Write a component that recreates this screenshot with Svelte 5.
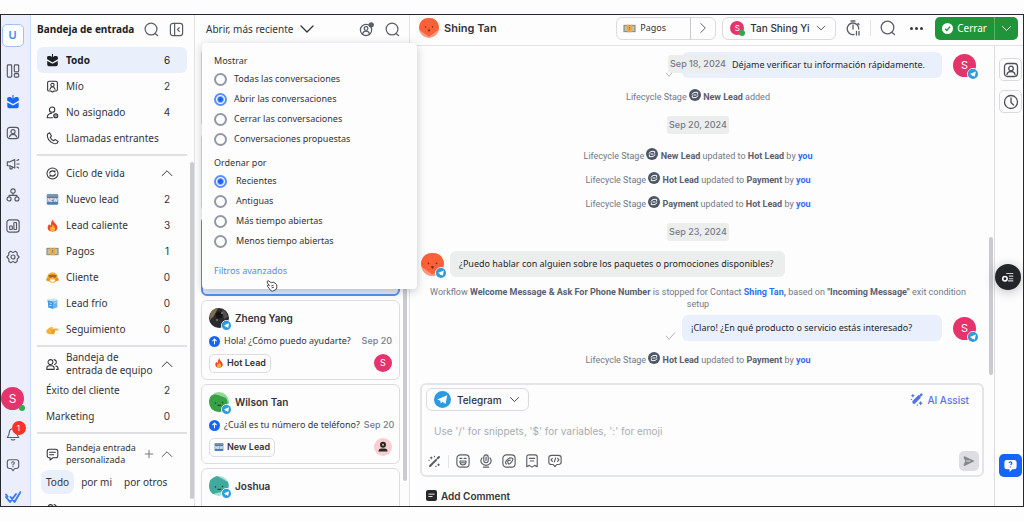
<script>
  let show = $state('open');
  let order = $state('recent');
  let draft = $state('');

  // inner markup of 16x16 line icons, stroked with currentColor
  const icons = {
    search: '<circle cx="7.500" cy="7.500" r="6.300"/><path d="M12 12.500l2.500 2"/>',
    panel: '<rect x="1.500" y="1.500" width="13" height="13" rx="2.500"/><path d="M6 1.500v13M11 6L9 8l2 2"/>',
    board: '<rect x="1.500" y="1" width="5" height="14" rx="1"/><rect x="9.500" y="1" width="5" height="8" rx="1"/><rect x="9.500" y="11" width="5" height="4" rx="1"/>',
    inbox: '<path d="M2 4.500Q2 3 3.500 3H5l3 2 3-2h1.500Q14 3 14 4.500V6l-6 3.500L2 6z" fill="currentColor"/><path d="M1.500 8.500L8 12l6.500-3.500V13q0 2-2 2h-9q-2 0-2-2z" fill="currentColor" stroke="none"/><path d="M8 .5v4"/>',
    contact: '<rect x="1.500" y="1.500" width="13" height="13" rx="3"/><circle cx="8" cy="6.500" r="2.300"/><path d="M4 12.500q.5-3 4-3t4 3"/>',
    mine: '<path d="M2 3.500Q2 1.500 4 1.500h8q2 0 2 2V12q0 1.500-1.500 1.500H10l-2 1.500-2-1.500H3.500Q2 13.500 2 12z"/><circle cx="8" cy="6" r="2"/><path d="M4.800 11.500l1.700-3h3l1.700 3"/>',
    unassigned: '<circle cx="7.500" cy="4.500" r="3.300"/><path d="M1.500 14.500q0-5 5.500-5.500M1.500 14.500H8"/><circle cx="12" cy="12" r="2.500" fill="currentColor" fill-opacity=".5"/>',
    phone: '<path d="M2 2.500L4.500 1l2.200 4-1.500 1.600q1.200 2.800 4.200 4.200l1.600-1.500 4 2.200-1.500 2.500q-1.500 1-4 0Q3.500 11.500 2 6.500q-.8-2.500 0-4z"/>',
    megaphone: '<path d="M1.500 5.500h3L10 3v9.500L4.500 10h-3zM4.500 10v3.500H7V11M12.500 4l2-1M12.500 8h2.500M12.500 11.500l2 1"/>',
    flow: '<circle cx="8" cy="3.500" r="2.500"/><circle cx="3.500" cy="12.500" r="2.300"/><circle cx="12.500" cy="12.500" r="2.300"/><path d="M8 6v2.500M3.500 10V8.500h9V10"/>',
    chart: '<rect x="1" y="1" width="14" height="14" rx="3"/><rect x="4.200" y="8" width="3" height="4" rx=".5"/><rect x="9" y="4" width="3" height="8" rx=".5"/>',
    gear: '<path d="M5.500 1.500L8 3l2.500-1.500 2.200 1.300.1 2.700L15 8l-2.200 2.500-.1 2.700-2.200 1.300L8 13l-2.500 1.500-2.200-1.300-.1-2.700L1 8l2.200-2.500.1-2.700z"/><circle cx="8" cy="8" r="2.300"/>',
    bell: '<path d="M8 2q-4 0-4.300 4.500Q3.500 9.500 1.500 12h13q-2-2.500-2.200-5.500Q12 2 8 2zM6 14.300q2 1.200 4 0"/>',
    help: '<path d="M4 2h8q2.500 0 2.500 2.500v5Q14.500 12 12 12h-2l-2 2.500L6 12H4q-2.500 0-2.500-2.500v-5Q1.500 2 4 2z"/><path d="M6.500 5.700Q6.700 4.300 8 4.300t1.500 1.200Q9.500 6.600 8 7.500M8 9.300v.6"/>',
    cycle: '<circle cx="8" cy="8" r="6.800"/><path d="M4.500 7.500Q5 4.800 8 4.800q1.700 0 3 1.500V4.500M11.500 8.500Q11 11.200 8 11.200q-1.700 0-3-1.500v1.800"/>',
    team: '<circle cx="5.500" cy="5" r="3"/><path d="M1 14v-1.500q0-3 3-3h3q3 0 3 3V14zM10 2q2.800.5 2.800 3T10.500 8M12 9.800q3 .2 3 4.200h-2"/>',
    note: '<path d="M4 1.500h8q2.500 0 2.500 2.500v5.500Q14.500 12 12 12H8.500L5 14.800V12H4q-2.500 0-2.500-2.500V4Q1.500 1.500 4 1.500zM4.500 5.300h7M4.500 8.300h5"/>',
    up: '<path d="M1.500 11.500L8 5l6.500 6.500"/>',
    down: '<path d="M2 5l6 6 6-6"/>',
    right: '<path d="M5 2l6 6-6 6"/>',
    plus: '<path d="M8 2v12M2 8h12"/>',
    assignee: '<circle cx="7.500" cy="8.500" r="6"/><circle cx="7.500" cy="7" r="2"/><path d="M4 12.500q.5-2.700 3.500-2.700t3.500 2.700"/><circle cx="13" cy="3" r="2.200" fill="currentColor"/>',
    timer: '<path d="M9 14.500A5.800 5.800 0 1 1 13.800 9M6 1h4M8 5v4M13 3.500l1 1M11.500 11.500V15M14 11.500V15"/>',
    clock: '<circle cx="8" cy="8" r="6.500"/><path d="M8 4v4.500L10.500 11"/>',
    wand: '<path d="M2.500 13.500L10 6M12 4l1.500-1.500" stroke-width="2.600"/><path d="M4 2.500v2M3 3.500h2M13 11v2M12 12h2M8 1.500v.5M1 6.500h.5M9.500 14h.5"/>',
    emoji: '<rect x="1" y="1" width="14" height="14" rx="4"/><path d="M4.500 5h2.200M9.300 5h2.200M4.500 8h7q0 4.500-3.500 4.500T4.500 8zM6 10h4"/>',
    mic: '<rect x="5.500" y="1" width="5" height="9" rx="2.500"/><path d="M3.500 4.500Q1 8 3 10.500q2 2.500 5 2.500t5-2.500q2-2.500-.5-6M8 3.500v4M5 15h6"/>',
    clip: '<rect x="1" y="1" width="14" height="14" rx="4"/><path d="M5 11.500q-2-1.500.5-4.500t5.500-2.500 0 4.500-4 1.500.5-3 2-.5"/>',
    snippet: '<path d="M2 14.500V3.500q0-2.500 2.500-2.500h7Q14 1 14 3.500v11L11 13l-3 2-3-2zM5 5h6M6 8h4"/>',
    code: '<path d="M4 1.500h8q3 0 3 2.500v5.500q0 2.500-3 2.500h-2l-2 2.500L6 12H4q-3 0-3-2.500V4Q1 1.500 4 1.500zM5 5L3.500 6.800 5 8.500M11 5l1.500 1.800L11 8.500M8.700 4.500l-1.400 4.500"/>',
    check: '<path d="M2 9l4 4.500L14 4"/>',
    ticks: '<path d="M1 8l4 5 6-8M5.500 8L9.500 13 15.500 3M1 5.500l1.500 2" stroke-width="2"/>'
  };

  // small full-colour pictures used as lifecycle marks
  const marks = {
    fresh: '<rect x="1" y="1.500" width="14" height="13" rx="1.500" fill="#4d7fb5"/><path d="M1 3q0-1.500 1.500-1.500h11Q15 1.500 15 3v1.500H1z" fill="#8a939c"/><text x="8" y="11" font-size="5.500" font-weight="700" text-anchor="middle" fill="#fff" font-family="Inter, sans-serif">NEW</text>',
    fire: '<path d="M8.500.5q.5 3 3 5 2.500 2.300 2.500 5Q14 15.500 8 15.500T2 10.500Q2 8 4 6q.5 2 1.700 2Q5.500 3.500 8.500.5z" fill="#ee4a2a"/><path d="M8.500 6.500q.3 2 1.700 3.200Q11.500 11 11.300 12.500 11 15.500 8 15.500T4.800 12.500q0-2 1.500-3.200.5 1 1.200 1Q7.200 8 8.500 6.500z" fill="#ffb52e"/>',
    money: '<rect x=".5" y="3.500" width="15" height="9" fill="#8e9184"/><rect x="2" y="5" width="12" height="6" fill="#c3c2a6"/><circle cx="8" cy="8" r="2.200" fill="#858776"/><path d="M4.500 3.500h2.500l1 9H5.500zM11.500 3.500H9l-1 9h2.500z" fill="#f3a73b"/>',
    client: '<circle cx="8" cy="8" r="6.500" fill="#f7b32f"/><path d="M2.500 5.500Q8 3 13.500 5.500L12 8l-2 .5L8 7l-2 1.500L4 8z" fill="#a8642a"/><path d="M4.500 10.500h7Q11 13.500 8 13.500t-3.500-3z" fill="#fff"/><circle cx="2.500" cy="10.500" r="2.200" fill="#e6912d"/><circle cx="13.500" cy="10.500" r="2.200" fill="#e6912d"/>',
    ice: '<path d="M2 3.500L9 2l5 1.500v9L9 14.500 3 13z" fill="#6bb3ee"/><path d="M2 3.500L8.500 5v9.500L3 13z" fill="#4295e0"/><path d="M2 3.500L9 2l5 1.500L8.500 5zM10 7.500l3-1M4 7l3 1M4 10.500h3" fill="#bfe0fa" stroke="#d9effd"/>',
    hand: '<path d="M.5 9q3-3.500 6.500-4.500l1.500.8-1 1.500H14q1.500 0 1.500 1.200T14 9.200h-3.500q1.200.6.5 1.600.5 1-.5 1.500 0 1.200-1.500 1.400H5Q2 13.500.5 12z" fill="#f6b03c"/><path d="M6.500 9.200H11M7 11h4M6.500 12.700h3.500" stroke="#cf8423" stroke-width=".7"/>'
  };

  const railItems = [
    ['Panel', 'board'],
    ['Bandeja', 'inbox'],
    ['Contactos', 'contact'],
    ['Difusiones', 'megaphone'],
    ['Flujos', 'flow'],
    ['Informes', 'chart'],
    ['Ajustes', 'gear']
  ];

  const inboxes = [
    { label: 'Todo', icon: 'inbox', count: 6, active: true },
    { label: 'Mío', icon: 'mine', count: 2 },
    { label: 'No asignado', icon: 'unassigned', count: 4 },
    { label: 'Llamadas entrantes', icon: 'phone' }
  ];

  const stages = [
    { label: 'Nuevo lead', mark: 'fresh', count: 2 },
    { label: 'Lead caliente', mark: 'fire', count: 3 },
    { label: 'Pagos', mark: 'money', count: 1 },
    { label: 'Cliente', mark: 'client', count: 0 },
    { label: 'Lead frío', mark: 'ice', count: 0 },
    { label: 'Seguimiento', mark: 'hand', count: 0 }
  ];

  const teams = [
    { label: 'Éxito del cliente', count: 2 },
    { label: 'Marketing', count: 0 }
  ];

  const showOptions = [
    ['all', 'Todas las conversaciones'],
    ['open', 'Abrir las conversaciones'],
    ['closed', 'Cerrar las conversaciones'],
    ['snoozed', 'Conversaciones propuestas']
  ];

  const orderOptions = [
    ['recent', 'Recientes'],
    ['oldest', 'Antiguas'],
    ['longest', 'Más tiempo abiertas'],
    ['shortest', 'Menos tiempo abiertas']
  ];

  const conversations = [
    { name: 'Zheng Yang', face: 'photo', text: 'Hola! ¿Cómo puedo ayudarte?', date: 'Sep 20', tag: 'Hot Lead', mark: 'fire', owner: 'S' },
    { name: 'Wilson Tan', face: 'green', text: '¿Cuál es tu número de teléfono?', date: 'Sep 20', tag: 'New Lead', mark: 'fresh' },
    { name: 'Joshua', face: 'teal' }
  ];

  const updates = [
    ['New Lead', 'Hot Lead'],
    ['Hot Lead', 'Payment'],
    ['Payment', 'Hot Lead']
  ];

  const tools = [
    ['Emoji', 'emoji'],
    ['Audio', 'mic'],
    ['Adjuntar', 'clip'],
    ['Fragmentos', 'snippet'],
    ['Variables', 'code']
  ];
</script>

{#snippet icon(name, size = 12)}
  <svg class="icon" width={size} height={size} viewBox="0 0 16 16" fill="none" stroke="currentColor" stroke-width="1.3" stroke-linecap="round" stroke-linejoin="round" aria-hidden="true">{@html icons[name]}</svg>
{/snippet}

{#snippet mark(name, size = 12)}
  <svg class="icon" width={size} height={size} viewBox="0 0 16 16" aria-hidden="true">{@html marks[name]}</svg>
{/snippet}

{#snippet telegram(size)}
  <svg class="icon" width={size} height={size} viewBox="0 0 16 16" aria-hidden="true">
    <circle cx="8" cy="8" r="8" fill="#2c9be0" />
    <path d="M3 8l9.500-4-1.600 8.300-3-2.100-1.500 1.500-.4-2.600z" fill="#fff" />
  </svg>
{/snippet}

{#snippet face(kind, size = 20)}
  <svg class="icon" width={size} height={size} viewBox="0 0 20 20" aria-hidden="true">
    {#if kind === 'photo'}
      <circle cx="10" cy="10" r="10" fill="#2b2a2d" />
      <path d="M2 4Q5 0 9 0L5 8 1 12Q0 8 2 4z" fill="#7d6c52" />
      <path d="M13 2q5 1 6 7l-4 2z" fill="#51504f" />
      <circle cx="10" cy="7" r="3.500" fill="#151517" />
      <path d="M7 12h2M12 5h2" stroke="#b0a284" />
    {:else if kind === 'red'}
      <circle cx="10" cy="10" r="10" fill="#f79a84" />
      <path d="M0 9Q1 0 10 0t10 9q0 3-2 4l-7 5q-1 1-2 0l-7-5Q0 12 0 9z" fill="#fa6138" />
      <path d="M6 8.500l1 1M14 8.500l-1 1" stroke="#7c2e20" stroke-width="1.200" />
      <path d="M8.500 11.500h3L10 14z" fill="#6b2a20" />
    {:else}
      <circle cx="10" cy="10" r="10" fill={kind === 'green' ? '#93d79a' : '#a3dfd6'} />
      <path d={kind === 'green' ? 'M0 9Q1 1 9 3l8 3q3 5 0 10-3 4-7 4Q0 19 0 9z' : 'M0 10Q0 2 8 0l11 6q2 6-2 9l-5 1-8 2Q0 15 0 10z'} fill={kind === 'green' ? '#3aa046' : '#41a99d'} />
      <path d="M6 10.500l1 1M13 10l1 1M8.500 13q2 1 3.500 0" stroke="#174c36" stroke-width="1.200" fill="none" />
    {/if}
  </svg>
{/snippet}

{#snippet row(item)}
  <button class="row" class:active={item.active}>
    {#if item.icon}{@render icon(item.icon, 13)}{/if}
    {#if item.mark}{@render mark(item.mark, 13)}{/if}
    <span class="row-label">{item.label}</span>
    {#if item.count !== undefined}<span class="count">{item.count}</span>{/if}
  </button>
{/snippet}

{#snippet stageDot()}
  <svg class="stage-dot" width="12" height="12" viewBox="0 0 16 16" fill="none" stroke="#fff" stroke-width="1.300" aria-hidden="true">
    <circle cx="8" cy="8" r="8" fill="#4d5666" stroke="none" />
    <path d="M4 7.500Q5 4.500 8 4.500h3.500v3M12 8.500q-1 3-4 3H4.500v-3M6 8h4" />
  </svg>
{/snippet}

{#snippet update(from, to)}
  <p class="system">Lifecycle Stage {@render stageDot()} <b>{from}</b> updated to <b>{to}</b> by <a href="#you">you</a></p>
{/snippet}

{#snippet radios(name, options, selected, pick)}
  {#each options as [value, label]}
    <label class="option">
      <input type="radio" {name} {value} checked={selected === value} onchange={() => pick(value)} />
      {label}
    </label>
  {/each}
{/snippet}

<div class="frame">
  <nav class="rail" aria-label="Principal">
    <a class="workspace" href="#home">U</a>
    {#each railItems as [label, name]}
      <a class="rail-link" class:current={name === 'inbox'} href="#{name}" aria-label={label}>{@render icon(name, 14)}</a>
    {/each}
    <div class="rail-end">
      <button class="badge-host me" aria-label="Perfil">S<i class="online"></i></button>
      <button class="badge-host plain" aria-label="Avisos">{@render icon('bell', 14)}<span class="alert">1</span></button>
      <button class="plain" aria-label="Ayuda">{@render icon('help', 14)}</button>
      <a class="brand" href="#brand" aria-label="Inicio">{@render icon('ticks', 16)}</a>
    </div>
  </nav>

  <aside class="sidebar">
    <header class="side-head">
      <h1>Bandeja de entrada</h1>
      <button class="plain" aria-label="Buscar">{@render icon('search', 15)}</button>
      <button class="plain" aria-label="Contraer">{@render icon('panel', 15)}</button>
    </header>
    {#each inboxes as item}{@render row(item)}{/each}
    <hr />
    <button class="row section">
      {@render icon('cycle', 13)}
      <span class="row-label">Ciclo de vida</span>
      <span class="count">{@render icon('up')}</span>
    </button>
    {#each stages as item}{@render row(item)}{/each}
    <hr />
    <button class="row section">
      {@render icon('team', 13)}
      <span class="row-label">Bandeja de<br />entrada de equipo</span>
      <span class="count">{@render icon('up')}</span>
    </button>
    {#each teams as item}{@render row(item)}{/each}
    <hr />
    <div class="row section custom">
      {@render icon('note', 13)}
      <span class="row-label">Bandeja entrada<br />personalizada</span>
      <button class="plain" aria-label="Añadir">{@render icon('plus', 10)}</button>
      <button class="plain count" aria-label="Plegar">{@render icon('up')}</button>
    </div>
    <div class="tabs">
      <button class="tab chosen">Todo</button>
      <button class="tab">por mi</button>
      <button class="tab">por otros</button>
    </div>
    <div class="row more">{@render icon('team', 13)}</div>
    <i class="scroll side-scroll"></i>
  </aside>

  <section class="list">
    <header class="list-head">
      <button class="plain sort" aria-expanded="true">Abrir, más reciente {@render icon('down', 16)}</button>
      <button class="plain" aria-label="Asignados">{@render icon('assignee', 15)}</button>
      <button class="plain" aria-label="Buscar">{@render icon('search', 15)}</button>
    </header>
    <div class="cards">
      <div class="card"></div>
      <div class="card"></div>
      <div class="card selected"></div>
      {#each conversations as chat}
        <article class="card">
          <div class="who">
            <span class="badge-host">{@render face(chat.face)}<i class="channel">{@render telegram(9)}</i></span>
            <h3>{chat.name}</h3>
          </div>
          {#if chat.text}
            <div class="preview">
              <svg class="icon" width="11" height="11" viewBox="0 0 16 16" fill="none" stroke="#fff" stroke-width="1.500" aria-hidden="true"><circle cx="8" cy="8" r="8" fill="#1665f8" stroke="none" /><path d="M8 12V5M5 7.500L8 4.500l3 3" /></svg>
              <span>{chat.text}</span>
              <time>{chat.date}</time>
            </div>
            <div class="foot">
              <span class="tag">{@render mark(chat.mark, 10)}{chat.tag}</span>
              {#if chat.owner}
                <span class="owner">{chat.owner}</span>
              {:else}
                <span class="owner nobody">
                  <svg class="icon" width="12" height="12" viewBox="0 0 16 16" fill="#26262a" aria-hidden="true"><circle cx="8" cy="5" r="4" /><path d="M2 14q0-4 4-4h4q4 0 4 4z" /><circle cx="8" cy="5" r="1.200" fill="#f8cfcf" /></svg>
                </span>
              {/if}
            </div>
          {/if}
        </article>
      {/each}
    </div>
    <i class="scroll list-scroll"></i>

    <form class="popup">
      <fieldset>
        <legend>Mostrar</legend>
        {@render radios('show', showOptions, show, (v) => (show = v))}
      </fieldset>
      <fieldset class="ordering">
        <legend>Ordenar por</legend>
        {@render radios('order', orderOptions, order, (v) => (order = v))}
      </fieldset>
      <a href="#filters">Filtros avanzados</a>
      <svg class="pointer" width="12" height="12" viewBox="0 0 16 16" fill="#fff" stroke="#333" stroke-width="1.200" stroke-linejoin="round" aria-hidden="true">
        <path d="M2 4q-1.500-3 1-3l4 2.500q3-1.500 5 .5 3 1.500 2.500 5.500l-1 3-5 2.500q-3-.5-4-3.500L2 8.500Q1 6.500 3.500 7l1 .5z" />
        <path d="M7 8l3-1M7.500 10.500l3-1" fill="none" />
      </svg>
    </form>
  </section>

  <main class="chat">
    <header class="chat-head">
      {@render face('red')}
      <h2>Shing Tan</h2>
      <div class="box stage">
        {@render mark('money', 13)}
        <select aria-label="Etapa"><option>Pagos</option></select>
        <button class="plain" aria-label="Siguiente etapa">{@render icon('right')}</button>
      </div>
      <div class="box agent">
        <span class="badge-host small-me">S<i class="online"></i></span>
        <select aria-label="Agente"><option>Tan Shing Yi</option></select>
        {@render icon('down', 10)}
      </div>
      <button class="plain timer" aria-label="Posponer">{@render icon('timer', 16)}</button>
      <button class="plain find" aria-label="Buscar">{@render icon('search', 16)}</button>
      <button class="plain dots" aria-label="Más"><i></i><i></i><i></i></button>
      <div class="close">
        <button>
          <svg class="icon" width="11" height="11" viewBox="0 0 16 16" aria-hidden="true"><circle cx="8" cy="8" r="8" fill="#fff" /><path d="M4.500 8.500l2.500 2.500 4.500-5.500" fill="none" stroke="#1f9438" stroke-width="2" /></svg>
          Cerrar
        </button>
        <button aria-label="Opciones de cierre">{@render icon('down', 11)}</button>
      </div>
    </header>

    <div class="body">
      <div class="thread">
        <div class="messages">
          <div class="msg out">
            <span class="sent">{@render icon('check', 11)}</span>
            <p class="bubble first">Déjame verificar tu información rápidamente.</p>
            <span class="badge-host sender">S<i class="channel">{@render telegram(10)}</i></span>
            <time class="day floating">Sep 18, 2024</time>
          </div>
          <p class="system lead-added">Lifecycle Stage {@render stageDot()} <b>New Lead</b> added</p>
          <time class="day">Sep 20, 2024</time>
          {#each updates as [from, to]}{@render update(from, to)}{/each}
          <time class="day">Sep 23, 2024</time>
          <div class="msg">
            <span class="badge-host">{@render face('red', 23)}<i class="channel">{@render telegram(10)}</i></span>
            <p class="bubble">¿Puedo hablar con alguien sobre los paquetes o promociones disponibles?</p>
          </div>
          <p class="system workflow">
            Workflow <b>Welcome Message &amp; Ask For Phone Number</b> is stopped for Contact <a href="#contact">Shing Tan,</a>
            based on <b>"Incoming Message"</b> exit condition<br />setup
          </p>
          <div class="msg out">
            <span class="sent">{@render icon('check', 11)}</span>
            <p class="bubble">¡Claro! ¿En qué producto o servicio estás interesado?</p>
            <span class="badge-host sender">S<i class="channel">{@render telegram(10)}</i></span>
          </div>
          <div class="last">{@render update('Hot Lead', 'Payment')}</div>
          <i class="scroll thread-scroll"></i>
        </div>

        <form class="composer">
          <div class="bar">
            <div class="box via">
              {@render telegram(17)}
              <select aria-label="Canal"><option>Telegram</option></select>
              {@render icon('down', 11)}
            </div>
            <button type="button" class="plain assist">
              <svg class="icon" width="13" height="13" viewBox="0 0 16 16" fill="none" stroke="currentColor" stroke-linecap="round" aria-hidden="true"><path d="M5 11l6-6" stroke-width="4.500" /><path d="M13.500 2.500l.5-.5" stroke-width="3" /><path d="M3.500 2v2.500M2.300 3.300h2.500M13 11v3M11.500 12.500h3M9 14.500v.5M1.500 8h.5" stroke-width="1.500" /></svg>
              AI Assist
            </button>
          </div>
          <textarea rows="1" aria-label="Mensaje" placeholder="Use '/' for snippets, '$' for variables, ':' for emoji" bind:value={draft}></textarea>
          <div class="bar tools">
            <button type="button" class="plain wand" aria-label="Mejorar">{@render icon('wand', 13)}</button>
            {#each tools as [label, name]}
              <button type="button" class="plain" aria-label={label}>{@render icon(name, 14)}</button>
            {/each}
            <button class="send" aria-label="Enviar">
              <svg class="icon" width="12" height="12" viewBox="0 0 16 16" fill="#85868b" aria-hidden="true"><path d="M2 1.500L15.500 8 2 14.500q-1.500 0-1-2L3 8 1 3.500q-.5-2 1-2z" /><path d="M4 8h6" stroke="#dedee2" stroke-width="1.300" /></svg>
            </button>
          </div>
        </form>
        <button class="plain comment">
          <svg class="icon" width="11" height="11" viewBox="0 0 16 16" aria-hidden="true"><rect width="16" height="16" rx="3" fill="#26262a" /><path d="M3.500 6h9M3.500 9.500h6" stroke="#fff" stroke-width="1.300" /></svg>
          Add Comment
        </button>
      </div>

      <aside class="dock">
        <button class="dock-button" aria-label="Contacto">{@render icon('contact', 16)}</button>
        <button class="dock-button" aria-label="Actividad">{@render icon('clock', 16)}</button>
        <button class="dock-button support" aria-label="Soporte">
          <svg class="icon" width="15" height="15" viewBox="0 0 16 16" aria-hidden="true"><path d="M4 2h8q2.500 0 2.500 2.500v5Q14.500 12 12 12h-2l-3 3v-3H4q-2.500 0-2.500-2.500v-5Q1.500 2 4 2z" fill="#fff" /><path d="M6.500 5.500Q6.700 4.200 8 4.200t1.500 1.200Q9.500 6.400 8 7.300M8 9v1" fill="none" stroke="#1665f8" stroke-width="1.300" /></svg>
        </button>
        <button class="float" aria-label="Grabación">
          <svg class="icon" width="14" height="14" viewBox="0 0 16 16" fill="none" stroke="#cfcfd2" stroke-width="1.300" aria-hidden="true"><path d="M6 4h8M9 7h5M9 10h5M8 12.500h6" /><circle cx="4.500" cy="10" r="2.500" stroke="#fff" stroke-width="1.800" /></svg>
        </button>
      </aside>
    </div>
  </main>
</div>

<style>
  :global(body) {
    background: #fdfdfd;
  }

  .frame {
    --ui: Inter, 'Noto Sans', sans-serif;
    --copy: 'Noto Sans', 'Open Sans', sans-serif;
    --line: #e2e3e7;
    --blue: #1665f8;
    box-sizing: border-box;
    display: flex;
    height: calc(100vh - 28px);
    margin: 14px 0;
    border: 1px solid #29272b;
    overflow: hidden;
    color: #333338;
    font: 10px/16px var(--copy);
  }

  .frame * {
    box-sizing: border-box;
  }

  h1,
  h2,
  h3,
  p,
  fieldset,
  legend {
    margin: 0;
    padding: 0;
    border: 0;
  }

  button,
  select,
  textarea {
    margin: 0;
    padding: 0;
    border: 0;
    background: none;
    color: inherit;
    font: inherit;
  }

  select {
    appearance: none;
    outline: none;
  }

  a {
    text-decoration: none;
  }

  .icon {
    display: block;
    flex: none;
  }

  .plain {
    display: flex;
    align-items: center;
    color: #5b5d66;
  }

  .scroll {
    position: absolute;
    width: 4px;
    border-radius: 2px;
    background: #c9cbd0;
  }

  .badge-host {
    position: relative;
    flex: none;
  }

  .channel {
    position: absolute;
    right: -3px;
    bottom: -3px;
    border: 1px solid #fff;
    border-radius: 50%;
  }

  .online {
    position: absolute;
    right: -1px;
    bottom: -1px;
    width: 6px;
    height: 6px;
    border-radius: 50%;
    background: #2faa4b;
  }

  /* rail */
  .rail {
    display: flex;
    flex: 0 0 30px;
    flex-direction: column;
    align-items: center;
    gap: 17px;
    padding: 9px 6px 3px 0;
    border-right: 1px solid #cbe0fd;
    background: #eaeffb;
    color: #555862;
  }

  .workspace {
    width: 22px;
    height: 23px;
    border: 1px solid #9cc3f6;
    border-radius: 5px;
    background: #fff;
    color: #4c88ec;
    font: 600 11px/21px var(--ui);
    text-align: center;
  }

  .rail-link {
    color: inherit;
  }

  .rail-link.current,
  .brand {
    color: var(--blue);
  }

  .rail-end {
    display: flex;
    flex-direction: column;
    align-items: center;
    gap: 17px;
    margin-top: auto;
  }

  .me {
    width: 23px;
    height: 23px;
    border-radius: 50%;
    background: #e5346c;
    color: #fff;
    font: 12px/23px var(--ui);
  }

  .alert {
    position: absolute;
    top: -6px;
    right: -6px;
    width: 14px;
    height: 14px;
    border-radius: 50%;
    background: #fb3324;
    color: #fff;
    font: 8px/14px var(--ui);
    text-align: center;
  }

  .brand {
    height: 14px;
    color: #3f7df0;
  }

  /* sidebar */
  .sidebar {
    position: relative;
    flex: 0 0 164px;
    padding: 0 7px 0 6px;
    border-right: 1px solid var(--line);
    overflow: hidden;
  }

  .side-head {
    display: flex;
    align-items: center;
    gap: 10px;
    height: 28px;
    margin-bottom: 4px;
    padding-right: 3px;
  }

  .side-head h1 {
    flex: 1;
    color: #202024;
    font-size: 10px;
    font-weight: 700;
    white-space: nowrap;
  }

  .row {
    display: flex;
    align-items: center;
    gap: 7px;
    width: 100%;
    height: 26px;
    padding: 0 14px 0 9px;
    border-radius: 6px;
    text-align: left;
  }

  .row.active {
    background: #eaeffc;
    color: #202024;
    font-weight: 700;
  }

  .row-label {
    flex: 1;
    white-space: nowrap;
  }

  .count {
    width: 12px;
    font: 10px/16px var(--ui);
    text-align: center;
  }

  .section .row-label {
    line-height: 13px;
  }

  .custom {
    height: 32px;
  }

  .custom .row-label {
    font-size: 9px;
    line-height: 12px;
  }

  hr {
    height: 2px;
    margin: 3px 0 4px;
    border: 0;
    background: #e0e0e2;
  }

  .tabs {
    display: flex;
    gap: 2px;
    margin-left: 4px;
  }

  .tab {
    height: 24px;
    padding: 0 5px;
    border-radius: 8px;
  }

  .chosen {
    background: #eaeffc;
  }

  .more {
    margin-top: 2px;
  }

  .side-scroll {
    top: 147px;
    right: 0;
    bottom: 7px;
  }

  /* conversation list */
  .list {
    position: relative;
    display: flex;
    flex: 0 0 215px;
    flex-direction: column;
    min-width: 0;
    border-right: 1px solid var(--line);
  }

  .list-head {
    display: flex;
    flex: none;
    align-items: center;
    gap: 11px;
    height: 28px;
    margin-bottom: 2px;
    padding: 0 9px 0 11px;
  }

  .sort {
    flex: 1;
    gap: 6px;
    color: #333338;
    white-space: nowrap;
  }

  .cards {
    display: flex;
    flex: 1;
    flex-direction: column;
    gap: 4px;
    min-height: 0;
    padding: 3px 9px 0 6px;
    overflow: hidden;
  }

  .card {
    flex: 0 0 80px;
    padding: 6px 7px;
    border: 1px solid #dcdde1;
    border-radius: 6px;
  }

  .selected {
    border: 2px solid #5b8cf0;
    background: #e3e9f6;
  }

  .who {
    display: flex;
    align-items: center;
    gap: 6px;
    height: 22px;
  }

  h3 {
    font: 600 10px/16px var(--ui);
  }

  .preview {
    display: flex;
    align-items: center;
    gap: 4px;
    height: 24px;
    font-size: 9px;
    white-space: nowrap;
  }

  .preview span {
    flex: 1;
  }

  .preview time {
    color: #747c8d;
    font: 500 9px/16px var(--ui);
  }

  .foot {
    display: flex;
    align-items: center;
    justify-content: space-between;
    height: 20px;
  }

  .tag {
    display: flex;
    align-items: center;
    gap: 3px;
    height: 19px;
    padding: 0 4px;
    border: 1px solid #dcdde1;
    border-radius: 5px;
    font: 600 9px/16px var(--ui);
  }

  .owner {
    display: grid;
    place-items: center;
    width: 18px;
    height: 18px;
    border-radius: 50%;
    background: #e5346c;
    color: #fff;
    font: 9px/18px var(--ui);
  }

  .nobody {
    background: #f8cfcf;
  }

  .list-scroll {
    top: 100px;
    right: 2px;
    bottom: 25px;
  }

  .popup {
    position: absolute;
    z-index: 2;
    top: 28px;
    left: 7px;
    display: flex;
    flex-direction: column;
    width: 215px;
    padding: 10px 12px;
    border-radius: 4px;
    background: #fdfdfd;
    box-shadow: 0 2px 8px rgb(30 40 60 / 25%);
    font-size: 9px;
  }

  .option {
    display: flex;
    align-items: center;
    gap: 7px;
    height: 20px;
  }

  .ordering {
    margin-top: 6px;
  }

  .ordering .option {
    gap: 9px;
  }

  .option input {
    appearance: none;
    width: 13px;
    height: 13px;
    margin: 0;
    border: 2px solid #9398a5;
    border-radius: 50%;
  }

  .option input:checked {
    border-color: #5b8ff8;
    background: radial-gradient(circle, var(--blue) 2px, #fdfdfd 4px);
  }

  .popup a {
    margin-top: 12px;
    color: #5c86ee;
  }

  .pointer {
    position: absolute;
    bottom: -3px;
    left: 64px;
  }

  /* chat */
  .chat {
    display: flex;
    flex: 1;
    flex-direction: column;
    min-width: 0;
  }

  .chat-head {
    display: flex;
    flex: none;
    align-items: center;
    height: 31px;
    padding: 0 5px 4px 9px;
    border-bottom: 1px solid var(--line);
  }

  .chat-head h2 {
    flex: 1;
    margin-left: 5px;
    font: 600 11px/16px var(--ui);
  }

  .box {
    display: flex;
    align-items: center;
    height: 23px;
    border: 1px solid #dadbe0;
    border-radius: 6px;
  }

  .box select {
    flex: 1;
  }

  .stage {
    gap: 4px;
    width: 100px;
    padding-left: 6px;
    font-size: 9px;
  }

  .stage .plain {
    justify-content: center;
    width: 25px;
    height: 100%;
    border-left: 1px solid #c6c8ce;
  }

  .agent {
    gap: 6px;
    width: 114px;
    margin-left: 6px;
    padding: 0 9px 0 7px;
    font: 500 10px/16px var(--ui);
  }

  .small-me {
    width: 14px;
    height: 14px;
    border-radius: 50%;
    background: #e5346c;
    color: #fff;
    font: 8px/14px var(--ui);
    text-align: center;
  }

  .timer {
    margin-left: 9px;
    padding-right: 9px;
    border-right: 1px solid var(--line);
  }

  .find {
    margin-left: 9px;
  }

  .dots {
    gap: 2px;
    margin: 0 12px 0 14px;
  }

  .dots i {
    width: 3px;
    height: 3px;
    border-radius: 50%;
    background: #35363b;
  }

  .close {
    display: flex;
    height: 23px;
    border-radius: 5px;
    background: #1f9438;
    color: #fff;
    overflow: hidden;
  }

  .close button {
    display: flex;
    align-items: center;
    gap: 4px;
    padding: 0 7px;
  }

  .close button + button {
    padding: 0 6px;
    border-left: 1px solid #58b06a;
  }

  .body {
    display: flex;
    flex: 1;
    min-height: 0;
  }

  .thread {
    display: flex;
    flex: 1;
    flex-direction: column;
    min-width: 0;
    padding: 0 10px;
  }

  .messages {
    position: relative;
    display: flex;
    flex: 1;
    flex-direction: column;
    align-items: center;
    margin-right: -9px;
    padding: 6px 17px 0 0;
    font: 9px/16px var(--ui);
  }

  .msg {
    position: relative;
    display: flex;
    align-items: center;
    align-self: stretch;
    gap: 6px;
    height: 26px;
    padding-left: 1px;
  }

  .out {
    justify-content: flex-end;
    gap: 10px;
  }

  .bubble {
    padding: 5px 12px 5px 9px;
    border-radius: 6px;
    background: #eceeed;
    color: #26262a;
    font: 9px/16px var(--copy);
  }

  .out .bubble {
    width: 260px;
    padding-right: 0;
    margin-right: 1px;
    background: #eaeffc;
  }

  .out .first {
    padding-left: 50px;
  }

  .sender {
    width: 23px;
    height: 23px;
    border-radius: 50%;
    background: #e5346c;
    color: #fff;
    font: 11px/23px var(--ui);
    text-align: center;
  }

  .sent {
    align-self: flex-end;
    margin-right: -4px;
    color: #a9abb2;
  }

  .day {
    height: 18px;
    margin: 7px 0 10px;
    padding: 0 2px;
    border-radius: 3px;
    background: #eceeee;
    color: #747985;
    font: 500 9px/18px var(--ui);
  }

  .floating {
    position: absolute;
    top: 3px;
    right: 248px;
    margin: 0;
  }

  .system {
    height: 24px;
    color: #737886;
    font: 9px/24px Roboto, sans-serif;
    text-align: center;
  }

  .lead-added {
    margin-top: 7px;
  }

  .system b {
    color: #596071;
    font-weight: 700;
  }

  .system a {
    color: #2f6fee;
    font-weight: 700;
  }

  .stage-dot {
    vertical-align: -1px;
  }

  .workflow {
    height: auto;
    margin: 9px 0 5px;
    line-height: 12px;
  }

  .last {
    margin-top: 7px;
  }

  .thread-scroll {
    top: 191px;
    right: 0;
    bottom: 8px;
  }

  .composer {
    display: flex;
    flex-direction: column;
    height: 94px;
    padding: 3px 3px 4px 4px;
    border: 2px solid #e4e5e8;
    border-radius: 6px;
    font-family: var(--ui);
  }

  .bar {
    display: flex;
    align-items: center;
  }

  .via {
    gap: 6px;
    width: 103px;
    padding: 0 8px 0 7px;
    font: 500 10px/16px var(--ui);
  }

  .assist {
    gap: 4px;
    margin: 0 10px 0 auto;
    color: #5673e6;
    font: 500 10px/16px var(--ui);
  }

  textarea {
    flex: 1;
    padding: 12px 8px 0;
    outline: none;
    resize: none;
    font-size: 10px;
    line-height: 16px;
  }

  textarea::placeholder {
    color: #a7abb4;
    opacity: 1;
  }

  .tools {
    gap: 9px;
    padding-left: 2px;
  }

  .wand {
    margin-right: -2px;
    padding-right: 7px;
    border-right: 1px solid var(--line);
  }

  .send {
    display: grid;
    place-items: center;
    width: 20px;
    height: 20px;
    margin-left: auto;
    border-radius: 5px;
    background: #dedee2;
  }

  .comment {
    gap: 4px;
    height: 29px;
    padding: 8px 6px 0;
    color: #333338;
    font: 600 10px/16px var(--ui);
  }

  /* right dock */
  .dock {
    position: relative;
    display: flex;
    flex: 0 0 29px;
    flex-direction: column;
    align-items: center;
    gap: 9px;
    padding: 12px 0 29px 3px;
    border-left: 1px solid #dcdde1;
  }

  .dock-button {
    display: grid;
    place-items: center;
    width: 23px;
    height: 23px;
    border: 1px solid #dadbe0;
    border-radius: 5px;
    color: #4c4f57;
  }

  .support {
    margin-top: auto;
    border: 0;
    background: var(--blue);
  }

  .float {
    position: absolute;
    top: 218px;
    right: 2px;
    display: grid;
    place-items: center;
    width: 26px;
    height: 26px;
    border-radius: 50%;
    background: #242528;
    box-shadow: 0 2px 12px rgb(0 0 0 / 25%);
  }
</style>
